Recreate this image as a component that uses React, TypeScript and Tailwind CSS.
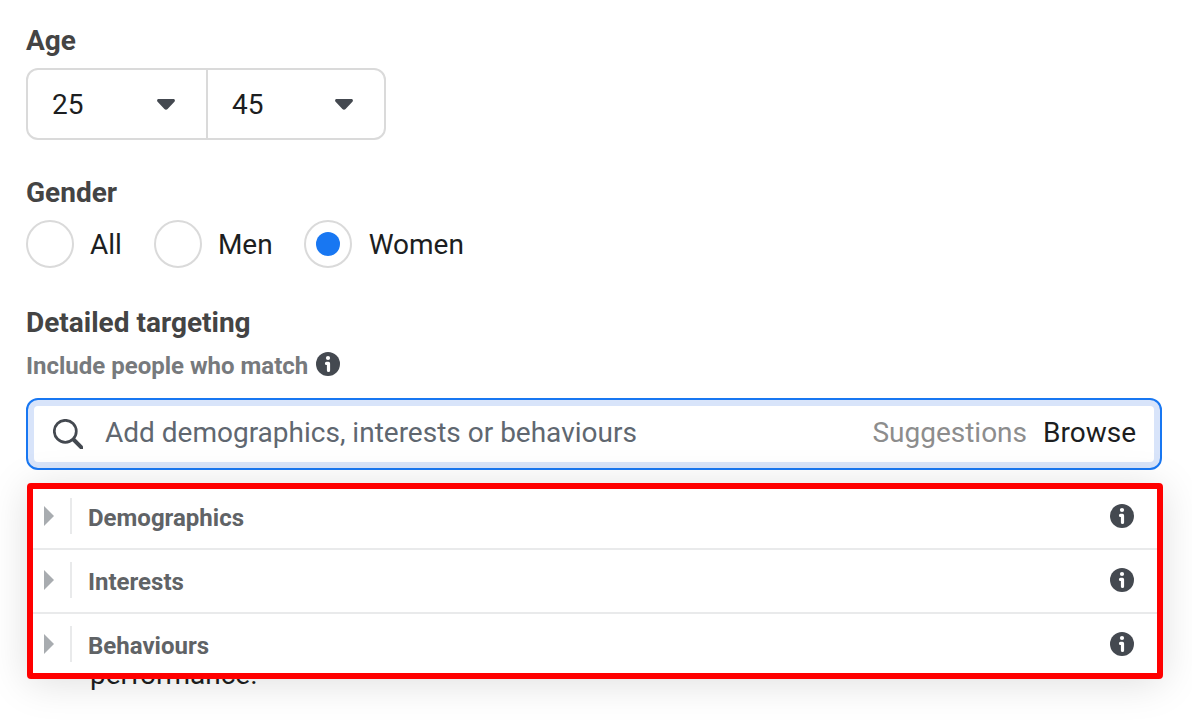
const categories = ['Demographics', 'Interests', 'Behaviours']

const genders = [
  { label: 'All', className: 'mr-8', checked: false },
  { label: 'Men', className: 'mr-[31px]', checked: false },
  { label: 'Women', className: '', checked: true },
]

function InfoIcon() {
  return (
    <svg className="size-6 shrink-0" viewBox="0 0 24 24">
      <circle cx="12" cy="12" r="12" fill="#444950" />
      <circle cx="12" cy="6" r="2.1" fill="#fff" />
      <path
        d="M10.5 11.4h2v7.1"
        fill="none"
        stroke="#fff"
        strokeWidth="3.2"
        strokeLinecap="round"
        strokeLinejoin="round"
      />
    </svg>
  )
}

function SearchIcon() {
  return (
    <svg
      className="size-[30px] shrink-0"
      viewBox="0 0 30 30"
      fill="none"
      stroke="#444950"
    >
      <circle cx="12.3" cy="12.3" r="11" strokeWidth="2.7" />
      <path d="M20 20l10 10" strokeWidth="4" />
    </svg>
  )
}

function AgeSelect({ value }: { value: string }) {
  return (
    <button className="flex h-full w-full items-center justify-between pl-6 pr-[31px] text-[28px] leading-8">
      <span className="pt-0.5">{value}</span>
      <svg className="h-3 w-[18px]" viewBox="0 0 18 12">
        <path
          d="M1.6 1h14.8c1.5 0 2 1.7 1 2.8l-6.8 7.2c-.9 1-2.3 1-3.2 0L.6 3.8C-.4 2.7.1 1 1.6 1z"
          fill="#444950"
        />
      </svg>
    </button>
  )
}

export default function App() {
  return (
    <div className="relative h-[722px] w-[1192px] overflow-hidden bg-white px-[26px] pt-[25px] font-['Roboto',sans-serif] text-[#1c1e21]">
      <h2 className="h-[43px] text-[28px] font-bold leading-8 text-[#444]">
        Age
      </h2>
      <div className="flex h-18 w-[360px] rounded-xl border-2 border-[#dadada]">
        <div className="w-[178px]">
          <AgeSelect value="25" />
        </div>
        <div className="flex-1 border-l-2 border-[#dadada]">
          <AgeSelect value="45" />
        </div>
      </div>

      <h2 className="mt-[37px] h-[43px] text-[28px] font-bold leading-8 text-[#444]">
        Gender
      </h2>
      <div className="flex h-12">
        {genders.map((gender) => (
          <label
            key={gender.label}
            className={`flex items-center ${gender.className}`}
          >
            <span className="flex size-12 items-center justify-center rounded-full border-2 border-[#dadada]">
              {gender.checked && (
                <span className="size-6 rounded-full bg-[#1877f2]" />
              )}
            </span>
            <span
              className={`pt-0.5 text-[28px] leading-8 ${gender.checked ? 'ml-[17px]' : 'ml-4'}`}
            >
              {gender.label}
            </span>
          </label>
        ))}
      </div>

      <h2 className="mt-[39px] text-[28px] font-bold leading-8 text-[#444]">
        Detailed targeting
      </h2>
      <div className="mt-[11px] flex h-7 items-center gap-2">
        <span className="pt-1 text-2xl font-bold leading-7 text-[#777a7d]">
          Include people who match
        </span>
        <InfoIcon />
      </div>

      <div className="mt-5 flex h-18 w-[1136px] items-center rounded-xl border-2 border-[#1877f2] bg-[#d8e4fa] p-1.5">
        <div className="flex h-full flex-1 items-center rounded-[4px] bg-white pl-[19px] pr-[18px] text-[28px] leading-8">
          <SearchIcon />
          <span className="ml-[22px] flex-1 pb-0.5 text-[#606770]">
            Add demographics, interests or behaviours
          </span>
          <span className="mr-4 pb-0.5 text-[#8d8d8d]">Suggestions</span>
          <span className="pb-0.5">Browse</span>
        </div>
      </div>

      <div className="ml-16 mt-[189px] text-[28px] leading-8">performance.</div>

      <div className="absolute left-[27px] top-[483px] h-[196px] w-[1136px] rounded-[4px] border-6 border-[#f00] bg-white shadow-[0_4px_40px_rgba(0,0,0,0.13)]">
        <div className="-mt-[3px]">
          {categories.map((category) => (
            <div
              key={category}
              className="flex h-16 items-start border-b-2 border-[#e9eaeb] pl-[11px] pr-[23px] pt-3 last:h-[62px] last:border-b-0"
            >
              <svg className="mt-2 h-5 w-2.5" viewBox="0 0 10 20">
                <path d="M0 0l10 10L0 20z" fill="#a8acb0" />
              </svg>
              <div className="ml-4 h-9 w-0.5 bg-[#e9eaeb]" />
              <span className="ml-4 mt-1.5 flex-1 text-2xl font-bold leading-7 text-[#606366]">
                {category}
              </span>
              <div className="mt-1.5">
                <InfoIcon />
              </div>
            </div>
          ))}
        </div>
      </div>
    </div>
  )
}
